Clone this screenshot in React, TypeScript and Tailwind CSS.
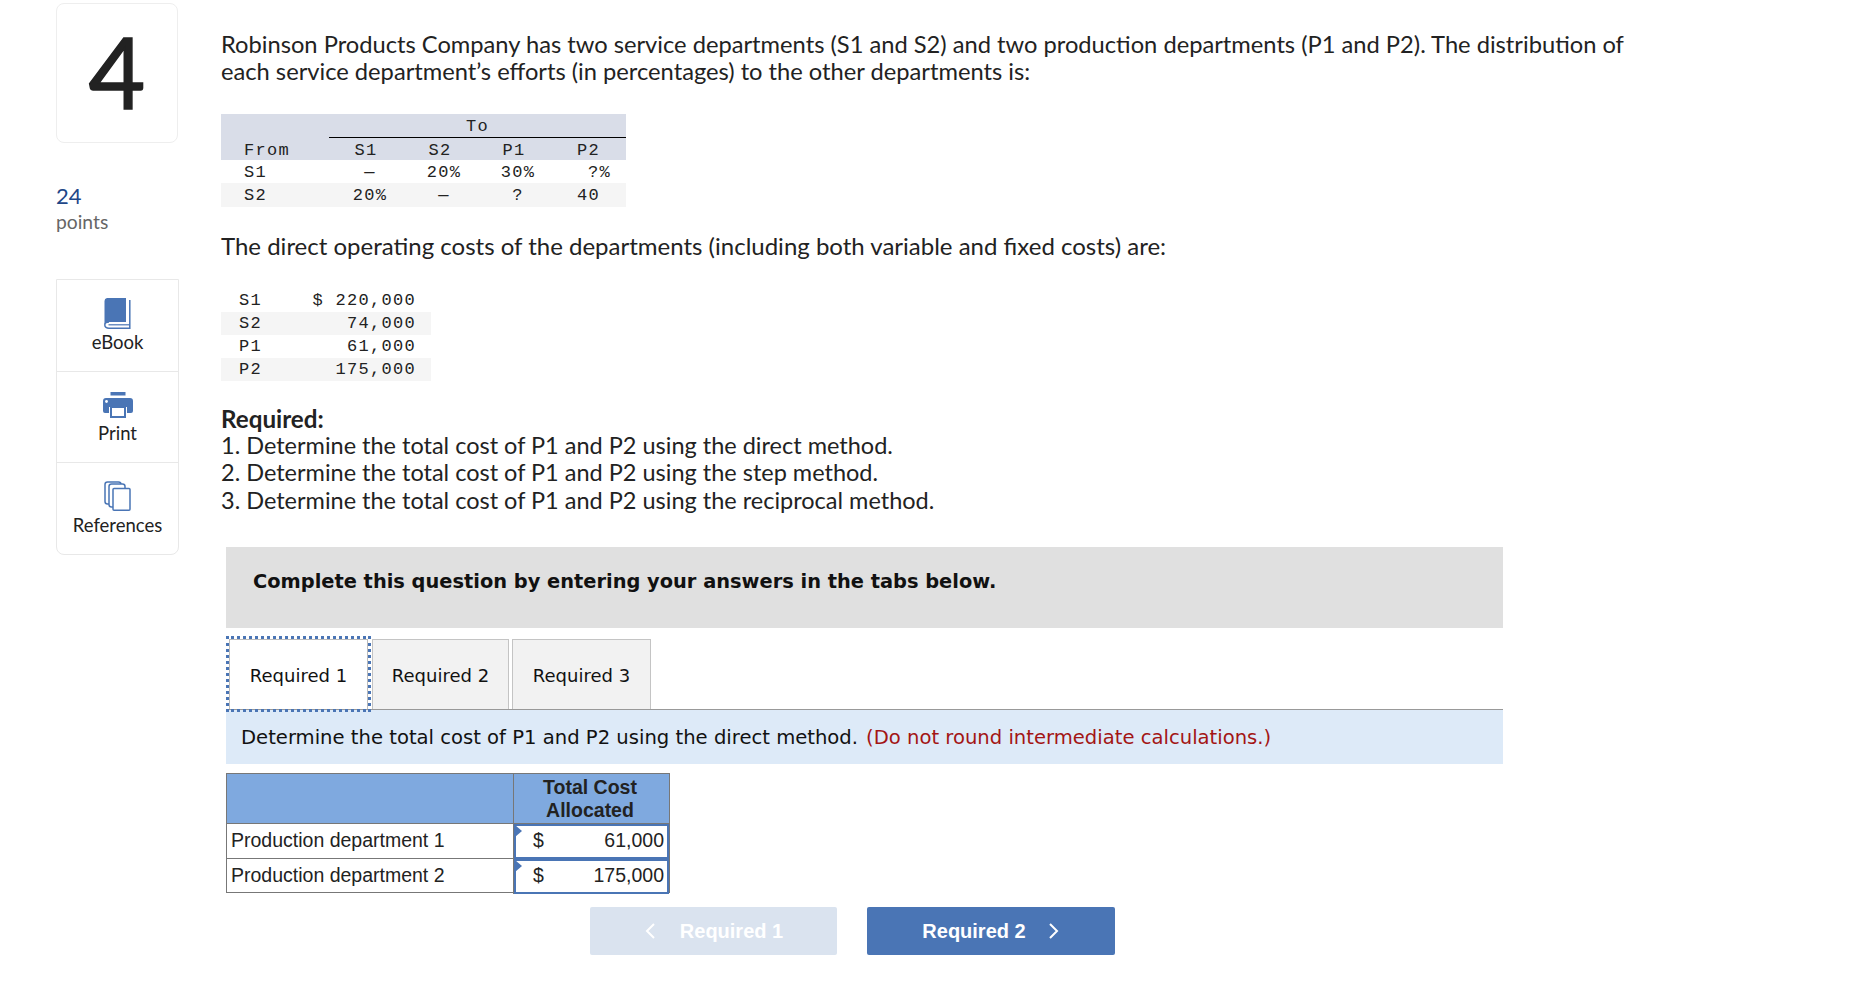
const proxima = "font-['Lato','Open_Sans',sans-serif]";

const allocations = [
  { from: "S1", cells: ["—", "20%", "30%", "?%"] },
  { from: "S2", cells: ["20%", "—", "?", "40"] },
];

const costs = [
  { dept: "S1", amount: "$ 220,000", shade: false },
  { dept: "S2", amount: "74,000", shade: true },
  { dept: "P1", amount: "61,000", shade: false },
  { dept: "P2", amount: "175,000", shade: true },
];

function BookIcon() {
  return (
    <svg width="27" height="31" viewBox="0 0 27 31">
      <path d="M3 0h19v24H5C2.500 24 .5 25 .5 27V3a3 3 0 0 1 2.500-3z" fill="#4a75b5" />
      <path d="M25.800 2v28.200H5C2.500 30.200.8 29 .8 27S2.500 24 5 24" fill="none" stroke="#4a75b5" strokeWidth="1.500" />
      <path d="M4.500 26.800h21" stroke="#4a75b5" strokeWidth="1.200" />
    </svg>
  );
}

function PrintIcon() {
  return (
    <svg width="30" height="26" viewBox="0 0 30 26">
      <rect x="7.500" y="0" width="15" height="3.500" fill="#4a75b5" />
      <path d="M3 6h24a3 3 0 0 1 3 3v10a2 2 0 0 1-2 2h-4v-6H6v6H2a2 2 0 0 1-2-2V9a3 3 0 0 1 3-3z" fill="#4a75b5" />
      <circle cx="3.500" cy="9.500" r="1.400" fill="#fff" />
      <rect x="8" y="15" width="14" height="10" fill="#fff" stroke="#4a75b5" strokeWidth="2" />
    </svg>
  );
}

function RefsIcon() {
  return (
    <svg width="27" height="30" viewBox="0 0 27 30" fill="#fff" stroke="#4a75b5" strokeWidth="1.500">
      <rect x="1" y="1" width="16" height="22" rx="2.500" />
      <rect x="5" y="3" width="16" height="23" rx="2.500" />
      <rect x="9" y="7.500" width="17" height="21.700" rx="1" />
    </svg>
  );
}

function ToolItem({ icon, label, h, iconBox }: { icon: React.ReactNode; label: string; h: string; iconBox: string }) {
  return (
    <div className={`flex flex-col items-center ${h}`}>
      <div className={`flex items-end ${iconBox}`}>{icon}</div>
      <div className="-mt-[1px] text-[18.500px] leading-[24px] text-[#222]">{label}</div>
    </div>
  );
}

function Sidebar() {
  return (
    <div className="ml-[56px] w-[123px] shrink-0 pt-[3px]">
      <div className="flex h-[140px] w-[122px] items-center justify-center rounded-[8px] border border-[#eeeeee] pb-[5px] text-[98px] leading-none text-[#222] [-webkit-text-stroke:1.500px_#222]">
        4
      </div>
      <div className="mt-[40px] text-[22px] leading-[26px] text-[#1f4788]">24</div>
      <div className="text-[19.300px] leading-[25px] text-[#666]">points</div>
      <div className="mt-[45px] rounded-b-[8px] border border-[#e8e8e8]">
        <ToolItem icon={<BookIcon />} label="eBook" h="h-[91px]" iconBox="h-[51px] pb-[2px]" />
        <div className="border-t border-[#e8e8e8]">
          <ToolItem icon={<PrintIcon />} label="Print" h="h-[90px]" iconBox="h-[50px] pb-[4px]" />
        </div>
        <div className="border-t border-[#e8e8e8]">
          <ToolItem icon={<RefsIcon />} label="References" h="h-[91px]" iconBox="h-[51px] pb-[3px]" />
        </div>
      </div>
    </div>
  );
}

function AllocationTable() {
  return (
    <div className="mt-[28px] w-[405px] font-['Liberation_Mono',monospace] text-[17px] tracking-[1.300px] text-[#222]">
      <div className="bg-[#d9dde8]">
        <div className="ml-[108px] h-[24px] border-b border-black pt-[1px] text-center leading-[24px]">To</div>
        <div className="grid h-[22px] grid-cols-[108px_74px_74px_74px_75px] pt-[2px] text-center leading-[22px]">
          <div className="pl-[23px] text-left">From</div>
          <div>S1</div>
          <div>S2</div>
          <div>P1</div>
          <div>P2</div>
        </div>
      </div>
      {allocations.map((row, i) => (
        <div
          key={row.from}
          className={`grid h-[23.500px] grid-cols-[108px_74px_74px_74px_75px] pt-[1px] text-center leading-[23px] ${i === 1 ? "bg-[#f5f5f5]" : ""}`}
        >
          <div className="pl-[23px] text-left">{row.from}</div>
          {row.cells.map((c, j) => (
            <div key={j} className={c === "?%" ? "pl-[22px]" : c === "40" ? "" : "pl-[8px]"}>
              {c}
            </div>
          ))}
        </div>
      ))}
    </div>
  );
}

function CostTable() {
  return (
    <div className="mt-[30px] w-[210px] font-['Liberation_Mono',monospace] text-[17px] tracking-[1.300px] text-[#222]">
      {costs.map((r) => (
        <div
          key={r.dept}
          className={`flex h-[23px] items-center justify-between pl-[18px] pr-[15px] ${r.shade ? "bg-[#f5f5f5]" : ""}`}
        >
          <span>{r.dept}</span>
          <span>{r.amount}</span>
        </div>
      ))}
    </div>
  );
}

function Tabs() {
  return (
    <div className="mt-[12px] flex h-[70px] w-[1277px] items-end border-b border-[#999] font-['DejaVu_Sans',sans-serif] text-[18px] text-[#111]">
      <div className="relative ml-[3px] flex h-[70px] w-[139px] items-center justify-center border border-[#bbb] border-b-0 bg-white pt-[1px] outline-dotted outline-[3px] outline-offset-[0px] outline-[#4a75b5]">
        Required 1
      </div>
      <div className="ml-[4px] flex h-[70px] w-[137px] items-center justify-center border border-[#c4c4c4] border-b-0 bg-[#f2f2f2] pt-[1px]">
        Required 2
      </div>
      <div className="ml-[3px] flex h-[70px] w-[139px] items-center justify-center border border-[#c4c4c4] border-b-0 bg-[#f2f2f2] pt-[1px]">
        Required 3
      </div>
    </div>
  );
}

function AnswerCell({ value }: { value: string }) {
  return (
    <div className="relative flex h-full items-center justify-between border-2 border-[#4a75b5] pb-[2px] pl-[17px] pr-[3px]">
      <span className="absolute -left-[1px] -top-[1px] h-0 w-0 border-y-[6px] border-l-[7px] border-y-transparent border-l-[#4a75b5]" />
      <span>$</span>
      <span>{value}</span>
    </div>
  );
}

function AnswerTable() {
  return (
    <div className="mt-[9px] w-[444px] border border-[#777] font-['Liberation_Sans',sans-serif] text-[19.500px] text-[#222]">
      <div className="grid h-[49px] grid-cols-[287px_1fr] bg-[#7fa9df]">
        <div className="border-r border-[#777]" />
        <div className="pr-[3px] pt-[2px] text-center text-[19.500px] font-bold leading-[23px]">
          Total Cost
          <br />
          Allocated
        </div>
      </div>
      <div className="grid h-[35px] grid-cols-[287px_1fr] border-t border-[#777]">
        <div className="flex items-center border-r border-[#777] pb-[2px] pl-[4px]">Production department 1</div>
        <AnswerCell value="61,000" />
      </div>
      <div className="grid h-[34px] grid-cols-[287px_1fr] border-t border-[#777]">
        <div className="flex items-center border-r border-[#777] pb-[2px] pl-[4px]">Production department 2</div>
        <AnswerCell value="175,000" />
      </div>
    </div>
  );
}

function NavButtons() {
  return (
    <div className="mt-[14px] ml-[364px] flex gap-[30px] font-['Liberation_Sans',sans-serif] text-[20px] font-bold text-white">
      <div className="flex h-[48px] w-[247px] items-center justify-center rounded-[2px] bg-[#dae3ef]">
        <svg width="12" height="18" viewBox="0 0 12 18" fill="none" stroke="#fff" strokeWidth="2">
          <path d="M10 2L3 9l7 7" />
        </svg>
        <span className="ml-[24px]">Required 1</span>
      </div>
      <div className="flex h-[48px] w-[248px] items-center justify-center rounded-[2px] bg-[#4a75b5]">
        <span>Required 2</span>
        <svg className="ml-[22px]" width="12" height="18" viewBox="0 0 12 18" fill="none" stroke="#fff" strokeWidth="2">
          <path d="M2 2l7 7-7 7" />
        </svg>
      </div>
    </div>
  );
}

export default function App() {
  return (
    <div className={`flex h-[986px] w-[1858px] overflow-hidden bg-white ${proxima}`}>
      <Sidebar />
      <div className="ml-[42px] flex-1 pt-[31px]">
        <div className="w-[1440px] text-[23.700px] leading-[27.300px] text-[#222]">
          <p>
            Robinson Products Company has two service departments (S1 and S2) and two production departments (P1 and
            P2). The distribution of each service department’s efforts (in percentages) to the other departments is:
          </p>
        </div>
        <AllocationTable />
        <p className="mt-[25px] text-[24px] leading-[27.300px] text-[#222]">
          The direct operating costs of the departments (including both variable and fixed costs) are:
        </p>
        <CostTable />
        <div className="mt-[24px] text-[23.500px] leading-[27.300px] text-[#222]">
          <p className="text-[24.200px] font-bold">Required:</p>
          <p>1. Determine the total cost of P1 and P2 using the direct method.</p>
          <p>2. Determine the total cost of P1 and P2 using the step method.</p>
          <p>3. Determine the total cost of P1 and P2 using the reciprocal method.</p>
        </div>
        <div className="ml-[5px] mt-[33px]">
          <div className="h-[81px] w-[1277px] bg-[#e0e0e0] pl-[27px] pt-[23px] font-['DejaVu_Sans',sans-serif] text-[19.400px] font-bold leading-[24px] text-[#111]">
            Complete this question by entering your answers in the tabs below.
          </div>
          <Tabs />
          <div className="flex h-[54px] w-[1277px] items-center bg-[#ddeaf8] pt-[1px] pl-[15px] font-['DejaVu_Sans',sans-serif] text-[19.600px] text-[#111]">
            Determine the total cost of P1 and P2 using the direct method.
            <span className="ml-[8px] text-[#a31515]">(Do not round intermediate calculations.)</span>
          </div>
          <AnswerTable />
          <NavButtons />
        </div>
      </div>
    </div>
  );
}
